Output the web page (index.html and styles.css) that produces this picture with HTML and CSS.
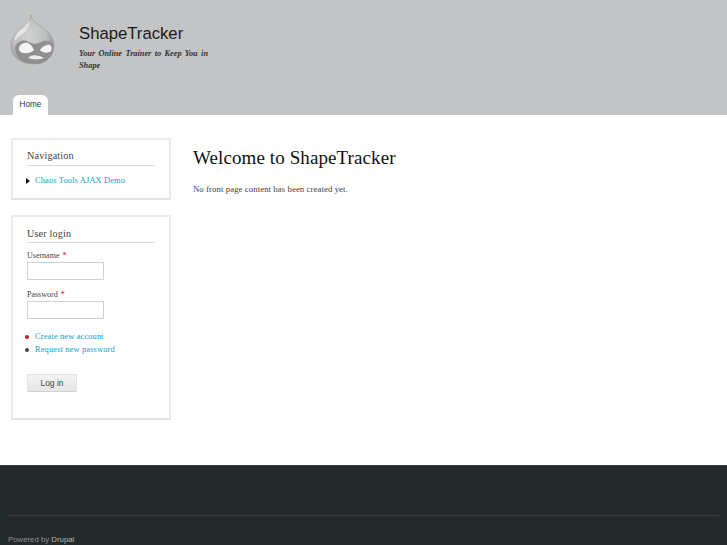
FILE: index.html
```html
<!DOCTYPE html>
<html lang="en">
<head>
<meta charset="utf-8">
<title>ShapeTracker</title>
<link rel="stylesheet" href="styles.css">
</head>
<body>
<header class="header">
  <div class="branding">
    <svg class="logo" width="46" height="52" viewBox="0 0 46 52" aria-label="Drupal logo">
      <defs>
        <radialGradient id="drop" cx="0.42" cy="0.42" r="0.62">
          <stop offset="0" stop-color="#d2d3d3"/>
          <stop offset="0.65" stop-color="#bcbdbd"/>
          <stop offset="1" stop-color="#8f9090"/>
        </radialGradient>
      </defs>
      <path d="M21 1C22 6 26 9 32 13C39 18 44 24 44 32C44 43 35 50 23 50C11 50 1 43 1 32C1 24 6 18 12 14C17 11 20 7 21 1Z" fill="url(#drop)" stroke="#a2a3a3" stroke-width="0.8"/>
      <path d="M19 6C18 10 13 14 9 17C6 20 4 24 5 27C9 22 14 20 17 15C19 12 20 9 19 6Z" fill="#e2e3e3"/>
      <path d="M5 33C7 27 14 25 19 28C24 31 27 30 31 28C35 26 41 26 43 31C44 38 40 46 32 49C25 51 13 50 8 43C6 40 5 36 5 33Z" fill="#8f9091"/>
      <path d="M9 35C9 30 14 28 18 29C21 30 23 34 24 36C22 38 18 40 14 39C11 39 9 37 9 35Z" fill="#f4f4f4"/>
      <path d="M30 36C32 33 37 30 40 31C42 32 42 35 41 37C39 39 35 39 33 38C32 38 31 37 30 36Z" fill="#f4f4f4"/>
      <path d="M18 44C22 40 28 41 34 44C30 45.5 24 46 18 44Z" fill="#eeeeee"/>
    </svg>
    <div class="site-text">
      <div class="site-name">ShapeTracker</div>
      <div class="slogan">Your Online Trainer to Keep You in Shape</div>
    </div>
  </div>
  <nav class="tabs"><a class="tab" href="#">Home</a></nav>
</header>
<div class="main">
  <aside class="sidebar">
    <section class="block block-nav">
      <h2 class="block-title">Navigation</h2>
      <ul class="menu">
        <li class="menu-item"><span class="arrow"></span><a class="link" href="#">Chaos Tools AJAX Demo</a></li>
      </ul>
    </section>
    <section class="block block-login">
      <h2 class="block-title">User login</h2>
      <form class="login-form">
        <label class="label" for="u">Username <span class="req">*</span></label>
        <input class="input" id="u" type="text">
        <label class="label label-pass" for="p">Password <span class="req">*</span></label>
        <input class="input" id="p" type="password">
        <ul class="links">
          <li class="link-item"><span class="bullet bullet-red"></span><a class="link" href="#">Create new account</a></li>
          <li class="link-item"><span class="bullet"></span><a class="link" href="#">Request new password</a></li>
        </ul>
        <button class="button" type="button">Log in</button>
      </form>
    </section>
  </aside>
  <main class="content">
    <h1 class="title">Welcome to ShapeTracker</h1>
    <p class="note">No front page content has been created yet.</p>
  </main>
</div>
<footer class="footer">
  <div class="footer-inner">Powered by <a class="footer-link" href="#">Drupal</a></div>
</footer>
</body>
</html>
```
FILE: styles.css
```css
* { box-sizing: border-box; }
html, body { margin: 0; padding: 0; }
body {
  width: 727px;
  height: 545px;
  overflow: hidden;
  background: #fff;
  color: #3b3b3b;
  font-family: "Liberation Serif", serif;
  font-size: 10.5px;
  display: flex;
  flex-direction: column;
}
.header {
  height: 115px;
  background: #c3c4c5;
  padding: 14px 0 0 10px;
  display: flex;
  flex-direction: column;
  justify-content: space-between;
}
.branding { display: flex; align-items: flex-start; }
.logo { flex: none; margin-right: 23px; }
.site-text { width: 129px; padding-top: 9px; }
.site-name {
  font-family: "Liberation Sans", sans-serif;
  font-size: 16.7px;
  line-height: 21px;
  color: #1a1a1a;
}
.slogan {
  margin-top: 4px;
  font-family: "Liberation Serif", serif;
  font-style: italic;
  font-weight: bold;
  font-size: 8.3px;
  line-height: 12px;
  color: #333;
  text-align: justify;
}
.tabs { display: flex; padding-left: 3px; }
.tab {
  width: 35px;
  height: 20px;
  background: #fff;
  border-radius: 6px 6px 0 0;
  font-family: "Liberation Sans", sans-serif;
  font-size: 8.2px;
  line-height: 19px;
  text-align: center;
  color: #333;
  text-decoration: none;
}
.main { flex: 1; display: flex; padding: 23px 0 0 11px; }
.sidebar { width: 160px; flex: none; }
.block {
  border: 2px solid #ebebeb;
  border-bottom-color: #e2e2e2;
  padding: 0 14px;
}
.block-nav { height: 62px; margin-bottom: 15px; }
.block-login { height: 205px; }
.block-title {
  margin: 0;
  font-weight: normal;
  font-size: 10.2px;
  color: #444;
  border-bottom: 1px solid #dcdcdc;
  height: 26px;
  padding-top: 8px;
  line-height: 15px;
  letter-spacing: 0.15px;
  width: 128px;
}
.block-login .block-title { padding-top: 9px; }
.menu, .links { list-style: none; margin: 0; padding: 0; }
.menu-item { display: flex; align-items: center; margin-top: 9px; line-height: 12px; }
.arrow {
  width: 0; height: 0;
  border-left: 4px solid #111;
  border-top: 3px solid transparent;
  border-bottom: 3px solid transparent;
  margin-left: -1px;
  margin-right: 5px;
}
.link { color: #0f9fc6; text-decoration: none; font-size: 8.4px; letter-spacing: 0.15px; }
.login-form { display: flex; flex-direction: column; align-items: flex-start; }
.label { font-size: 8px; line-height: 11px; color: #444; margin-top: 7px; height: 12px; }
.label-pass { margin-top: 9px; height: 12px; }
.req { color: #e00; padding-left: 1px; }
.input {
  display: block;
  width: 77px;
  height: 18px;
  border: 1px solid #d2d2d2;
  background: #fff;
  margin: 0;
  padding: 0;
}
.links { margin: 11px 0 0 -3px; }
.link-item { display: flex; align-items: center; height: 13px; }
.bullet { width: 4px; height: 4px; border-radius: 50%; background: #444; margin-right: 6px; margin-left: 1px; }
.bullet-red { background: #b22; }
.button {
  margin-top: 18px;
  width: 50px;
  height: 18px;
  padding: 0;
  border: 1px solid #e2e2e2;
  border-bottom-color: #d2d2d2;
  border-radius: 1px;
  background: linear-gradient(#f3f3f3, #e6e6e6);
  font-family: "Liberation Sans", sans-serif;
  font-size: 8.5px;
  color: #444;
}
.content { padding: 0 0 0 22px; }
.title {
  margin: 0;
  padding-top: 8px;
  font-weight: normal;
  font-size: 19px;
  line-height: 24px;
  color: #111;
  letter-spacing: 0.1px;
}
.note { margin: 13px 0 0; font-size: 8.7px; line-height: 12px; color: #444; letter-spacing: 0.1px; }
.footer {
  height: 80px;
  background: #24292c;
  border-top: 1px solid #3a3d40;
  padding: 49px 8px 0;
  font-family: "Liberation Sans", sans-serif;
  font-size: 7.8px;
  color: #8e8f90;
}
.footer-inner { border-top: 1px solid #3a3e42; padding-top: 19px; line-height: 10px; }
.footer-link { color: #b5b6b7; text-decoration: none; }
```
